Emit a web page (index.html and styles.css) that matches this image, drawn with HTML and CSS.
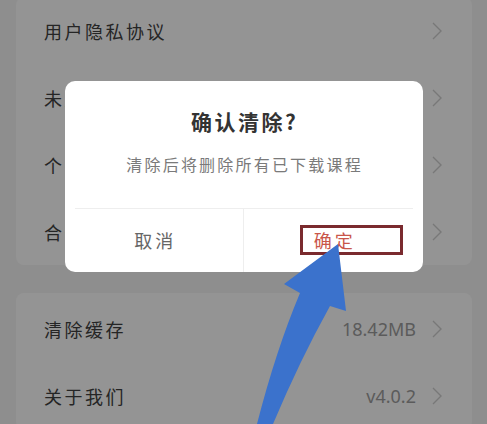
FILE: index.html
```html
<!DOCTYPE html>
<html lang="zh-CN">
<head>
<meta charset="utf-8">
<title>设置</title>
<link rel="stylesheet" href="styles.css">
</head>
<body>
<div class="page">
  <div class="group group-top">
    <div class="row"><span class="label">用户隐私协议</span><span class="right"><svg class="chev" viewBox="0 0 10 18"><polyline points="1,1 9,9 1,17"/></svg></span></div>
    <div class="row"><span class="label">未成年人</span><span class="right"><svg class="chev" viewBox="0 0 10 18"><polyline points="1,1 9,9 1,17"/></svg></span></div>
    <div class="row"><span class="label">个人信息</span><span class="right"><svg class="chev" viewBox="0 0 10 18"><polyline points="1,1 9,9 1,17"/></svg></span></div>
    <div class="row"><span class="label">合作伙伴</span><span class="right"><svg class="chev" viewBox="0 0 10 18"><polyline points="1,1 9,9 1,17"/></svg></span></div>
  </div>
  <div class="group group-bottom">
    <div class="row"><span class="label">清除缓存</span><span class="right"><span class="value">18.42MB</span><svg class="chev" viewBox="0 0 10 18"><polyline points="1,1 9,9 1,17"/></svg></span></div>
    <div class="row"><span class="label">关于我们</span><span class="right"><span class="value">v4.0.2</span><svg class="chev" viewBox="0 0 10 18"><polyline points="1,1 9,9 1,17"/></svg></span></div>
  </div>
</div>

<div class="mask">
  <div class="dialog">
    <div class="dialog-title">确认清除?</div>
    <div class="dialog-text">清除后将删除所有已下载课程</div>
    <div class="dialog-actions">
      <div class="btn btn-cancel">取消</div>
      <div class="btn btn-ok"><span class="ok-text">确定</span><span class="highlight"></span></div>
    </div>
  </div>
  <svg class="arrow" viewBox="0 0 487 424" width="487" height="424">
    <path d="M338 244 L346 311 L330 306 Q300 360 273 424 L257 424 Q276 350 300 293 L284 284 Z"/>
  </svg>
</div>
</body>
</html>
```

FILE: styles.css
```css
html, body {
  margin: 0;
  padding: 0;
}
body {
  width: 487px;
  height: 424px;
  overflow: hidden;
  background: #f5f5f5;
  font-family: "Noto Sans CJK SC", "Noto Sans", sans-serif;
  position: relative;
}
.page {
  display: flex;
  flex-direction: column;
}
.group {
  background: #ffffff;
  margin: 0 15px 0 16px;
  border-radius: 8px;
}
.group-top {
  margin-top: -3px;
}
.group-bottom {
  margin-top: 28px;
  padding-top: 2px;
}
.row {
  height: 67px;
  display: flex;
  align-items: center;
  justify-content: space-between;
  padding: 0 30px 0 28px;
}
.label {
  font-size: 18px;
  letter-spacing: 2.5px;
  color: #404040;
  white-space: nowrap;
}
.right {
  display: flex;
  align-items: center;
  gap: 16px;
}
.value {
  font-family: "Noto Sans", sans-serif;
  font-size: 18px;
  color: #9e9e9e;
}
.chev {
  width: 10px;
  height: 18px;
  fill: none;
  stroke: #cfcfcf;
  stroke-width: 1.4;
}
.mask {
  position: absolute;
  inset: 0;
  background: rgba(0, 0, 0, 0.42);
  display: flex;
  justify-content: center;
  align-items: flex-start;
  padding-top: 81px;
  box-sizing: border-box;
}
.dialog {
  width: 358px;
  height: 191px;
  background: #ffffff;
  border-radius: 10px;
  display: flex;
  flex-direction: column;
  align-items: center;
  box-sizing: border-box;
  padding-top: 25px;
}
.dialog-title {
  font-size: 21px;
  font-weight: 700;
  line-height: 30px;
  color: #333333;
  letter-spacing: 2.5px;
  padding-left: 2.5px;
}
.dialog-text {
  margin-top: 16px;
  font-size: 16px;
  line-height: 24px;
  letter-spacing: 2.2px;
  padding-left: 2.2px;
  color: #7a7a7a;
}
.dialog-actions {
  margin-top: auto;
  align-self: stretch;
  height: 64px;
  display: flex;
  position: relative;
}
.dialog-actions::before {
  content: "";
  position: absolute;
  left: 10px;
  right: 10px;
  top: 0;
  border-top: 1px solid #eeeeee;
}
.btn {
  flex: 1;
  display: flex;
  align-items: center;
  justify-content: center;
  font-size: 18px;
  letter-spacing: 3px;
  padding-left: 3px;
  position: relative;
}
.btn-cancel {
  color: #666666;
}
.btn-ok {
  color: #c9564a;
  border-left: 1px solid #eeeeee;
}
.highlight {
  position: absolute;
  left: 56px;
  top: 17px;
  width: 103px;
  height: 30px;
  box-sizing: border-box;
  border: 3px solid #7a2a2e;
}
.arrow {
  position: absolute;
  left: 0;
  top: 0;
}
.arrow path {
  fill: #3b72cc;
}
```
